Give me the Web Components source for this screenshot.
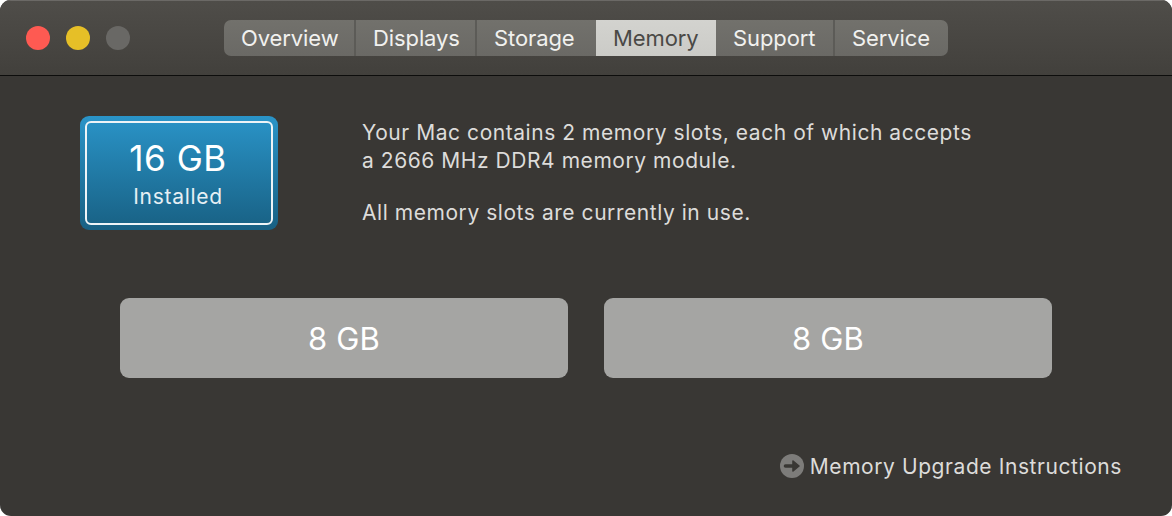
<!DOCTYPE html>
<html>
<head>
<meta charset="utf-8">
<style>
  html, body { margin: 0; height: 100%; background: #fff; }
  body { font-family: Inter, "Liberation Sans", sans-serif; }
</style>
</head>
<body>
<about-window>
  <traffic-lights slot="lights"></traffic-lights>
  <tab-bar slot="tabs">
    <tab-item>Overview</tab-item>
    <tab-item>Displays</tab-item>
    <tab-item>Storage</tab-item>
    <tab-item selected>Memory</tab-item>
    <tab-item>Support</tab-item>
    <tab-item>Service</tab-item>
  </tab-bar>
  <memory-panel>
    <installed-badge amount="16 GB" label="Installed"></installed-badge>
    <p slot="info">Your Mac contains 2 memory slots, each of which accepts<br>a 2666 MHz DDR4 memory module.</p>
    <p slot="info">All memory slots are currently in use.</p>
    <memory-slot slot="slots">8 GB</memory-slot>
    <memory-slot slot="slots">8 GB</memory-slot>
    <help-link slot="link">Memory Upgrade Instructions</help-link>
  </memory-panel>
</about-window>

<script>
class AboutWindow extends HTMLElement {
  constructor() {
    super();
    this.attachShadow({ mode: "open" });
    this.shadowRoot.innerHTML = `
      <style>
        :host {
          display: flex;
          flex-direction: column;
          width: 1172px;
          height: 516px;
          border-radius: 11px;
          overflow: hidden;
          background: #393734;
        }
        .titlebar {
          display: flex;
          align-items: flex-start;
          box-sizing: border-box;
          height: 76px;
          padding: 20px 0 0 26px;
          background: linear-gradient(#4f4d49, #42403c);
          box-shadow: inset 0 1px 0 #6b6966;
          border-bottom: 1px solid #0d0d0c;
        }
        .tabs { margin-left: 94px; }
      </style>
      <div class="titlebar">
        <slot name="lights"></slot>
        <div class="tabs"><slot name="tabs"></slot></div>
      </div>
      <slot></slot>
    `;
  }
}

class TrafficLights extends HTMLElement {
  constructor() {
    super();
    this.attachShadow({ mode: "open" });
    this.shadowRoot.innerHTML = `
      <style>
        :host { display: flex; gap: 16px; padding-top: 6px; }
        i { display: block; width: 24px; height: 24px; border-radius: 50%; }
        .close { background: #fe5a52; }
        .min   { background: #e6bf27; }
        .zoom  { background: #696865; }
      </style>
      <i class="close"></i><i class="min"></i><i class="zoom"></i>
    `;
  }
}

class TabBar extends HTMLElement {
  constructor() {
    super();
    this.attachShadow({ mode: "open" });
    this.shadowRoot.innerHTML = `
      <style>
        :host {
          display: grid;
          grid-template-columns: 132px 121px 119px 120px 119px 113px;
          height: 36px;
          border-radius: 7px;
          overflow: hidden;
          background: linear-gradient(#72716c, #6a6965);
        }
      </style>
      <slot></slot>
    `;
  }
}

class TabItem extends HTMLElement {
  constructor() {
    super();
    this.attachShadow({ mode: "open" });
    this.shadowRoot.innerHTML = `
      <style>
        :host {
          display: flex;
          align-items: center;
          box-sizing: border-box;
          height: 36px;
          padding-left: 17px;
          font-size: 22px;
          letter-spacing: -0.1px;
          color: #f1f1ef;
          border-right: 2px solid #5c5b57;
        }
        :host(:last-child), :host([selected]), :host(:nth-child(3)) { border-right: 0; }
        :host([selected]) { background: linear-gradient(#d3d3cf, #cbcbc7); color: #4a4946; }
      </style>
      <slot></slot>
    `;
  }
}

class MemoryPanel extends HTMLElement {
  constructor() {
    super();
    this.attachShadow({ mode: "open" });
    this.shadowRoot.innerHTML = `
      <style>
        :host {
          display: flex;
          flex-direction: column;
          flex: 1;
          padding: 40px 50px 0 80px;
          color: #dddcda;
        }
        .top { display: flex; gap: 84px; }
        .info { padding-top: 3px; }
        ::slotted(p) {
          margin: 0 0 24px;
          font-size: 21px;
          line-height: 28px;
          letter-spacing: 0.55px;
        }
        .slots {
          display: flex;
          gap: 36px;
          margin: 47px 70px 0 40px;
        }
        .link { display: flex; justify-content: flex-end; margin-top: 75px; }
      </style>
      <div class="top">
        <slot></slot>
        <div class="info"><slot name="info"></slot></div>
      </div>
      <div class="slots"><slot name="slots"></slot></div>
      <div class="link"><slot name="link"></slot></div>
    `;
  }
}

class InstalledBadge extends HTMLElement {
  constructor() {
    super();
    this.attachShadow({ mode: "open" });
    this.shadowRoot.innerHTML = `
      <style>
        :host {
          display: block;
          box-sizing: border-box;
          width: 198px;
          height: 114px;
          padding: 5px;
          border-radius: 9px;
          background: linear-gradient(#2a94c8, #186083);
        }
        .inner {
          box-sizing: border-box;
          display: flex;
          flex-direction: column;
          align-items: center;
          height: 104px;
          padding: 17px 2px 0 0;
          border: 2px solid #eef4f7;
          border-radius: 6px;
          color: #fff;
        }
        .amount { font-size: 35px; line-height: 36px; letter-spacing: 0.5px; }
        .label { margin-top: 9px; font-size: 21px; line-height: 24px; letter-spacing: 0.7px; color: #e6eff4; }
      </style>
      <div class="inner">
        <span class="amount">${this.getAttribute("amount")}</span>
        <span class="label">${this.getAttribute("label")}</span>
      </div>
    `;
  }
}

class MemorySlot extends HTMLElement {
  constructor() {
    super();
    this.attachShadow({ mode: "open" });
    this.shadowRoot.innerHTML = `
      <style>
        :host {
          display: flex;
          align-items: center;
          justify-content: center;
          flex: 1;
          height: 80px;
          border-radius: 9px;
          background: #a5a5a3;
          color: #fff;
          font-size: 31px;
          letter-spacing: 0.2px;
        }
      </style>
      <slot></slot>
    `;
  }
}

class HelpLink extends HTMLElement {
  constructor() {
    super();
    this.attachShadow({ mode: "open" });
    this.shadowRoot.innerHTML = `
      <style>
        :host {
          display: flex;
          align-items: center;
          gap: 6px;
          height: 26px;
          font-size: 21px;
          letter-spacing: 0.58px;
          color: #dddcda;
        }
        svg { display: block; width: 24px; height: 24px; }
      </style>
      <svg viewBox="0 0 24 24">
        <circle cx="12" cy="12" r="12" fill="#7d7c7a"/>
        <path d="M5.5 12H15" stroke="#393734" stroke-width="3.6" stroke-linecap="round"/>
        <path d="M13 7 19 12l-6 5z" fill="#393734" stroke="#393734" stroke-width="1.6" stroke-linejoin="round"/>
      </svg>
      <slot></slot>
    `;
  }
}

customElements.define("about-window", AboutWindow);
customElements.define("traffic-lights", TrafficLights);
customElements.define("tab-bar", TabBar);
customElements.define("tab-item", TabItem);
customElements.define("memory-panel", MemoryPanel);
customElements.define("installed-badge", InstalledBadge);
customElements.define("memory-slot", MemorySlot);
customElements.define("help-link", HelpLink);
</script>
</body>
</html>
